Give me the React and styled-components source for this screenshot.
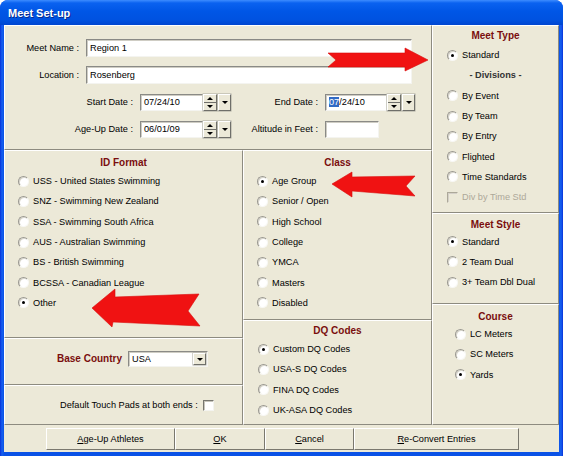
import React from "react";
import styled, { createGlobalStyle } from "styled-components";

const GlobalStyle = createGlobalStyle`
  html, body {
    margin: 0;
    padding: 0;
    background: #fff;
  }
  body {
    font-family: "Liberation Sans", Arial, sans-serif;
    font-size: 9.2px;
    color: #000;
  }
`;

const Window = styled.div`
  position: relative;
  width: 563px;
  height: 456px;
  display: flex;
  flex-direction: column;
  background: linear-gradient(90deg, #0831d9 0px, #1660f0 2px, #0a52e6 4px, #0a52e6 559px, #1660f0 561px, #0831d9 563px);
  border-radius: 8px 8px 0 0;
  overflow: hidden;
`;

const TitleBar = styled.div`
  height: 25px;
  flex: none;
  display: flex;
  align-items: center;
  padding-left: 8px;
  color: #fff;
  font-weight: bold;
  font-size: 11px;
  text-shadow: 1px 1px 0 #0a2a8a;
  background: linear-gradient(180deg, #3d8cff 0%, #0a62f0 12%, #0056e6 45%, #0052e0 80%, #0046d0 100%);
`;

const Client = styled.div`
  margin: 0 4px 4px;
  flex: 1;
  display: flex;
  flex-direction: column;
  background: #ece9d8;
`;

const Main = styled.div`
  display: flex;
  height: 400px;
`;

const Column = styled.div`
  width: ${(p) => p.$w}px;
  flex: none;
  display: flex;
  flex-direction: column;
`;

const Lower = styled.div`
  display: flex;
  height: 275px;
`;

const Panel = styled.div`
  height: ${(p) => p.$h}px;
  box-sizing: border-box;
  padding-top: ${(p) => p.$pt || 0}px;
  border-top: 1px solid #fff;
  border-left: 1px solid #fff;
  border-right: 1px solid #8d8b80;
  border-bottom: 1px solid #8d8b80;
  flex: none;
`;

const TopForm = styled(Panel)`
  display: flex;
  flex-direction: column;
  gap: 9px;
`;

const FieldRow = styled.div`
  display: flex;
  align-items: center;
  height: 18px;
`;

const Label = styled.div`
  width: ${(p) => p.$w}px;
  flex: none;
  box-sizing: border-box;
  padding-right: 7px;
  text-align: right;
  white-space: nowrap;
`;

const TextBox = styled.div`
  width: ${(p) => p.$w}px;
  height: ${(p) => p.$h || 18}px;
  flex: none;
  box-sizing: border-box;
  background: #fff;
  border: 1px solid;
  border-color: #8a8a86 #f4f4f0 #f4f4f0 #8a8a86;
  box-shadow: inset 1px 1px 0 #cfcdc4;
  padding-left: 3px;
  display: flex;
  align-items: center;
  white-space: nowrap;
  overflow: hidden;
`;

const Selected = styled.span`
  background: #316ac5;
  color: #fff;
`;

const SmallButton = styled.div`
  width: ${(p) => p.$w}px;
  height: ${(p) => p.$h || 17}px;
  flex: none;
  box-sizing: border-box;
  background: #ece9d8;
  border: 1px solid;
  border-color: #fff #6f6f6a #6f6f6a #fff;
  box-shadow: 0 0 0 0.5px #a8a79c;
  display: flex;
  flex-direction: column;
  align-items: center;
  justify-content: center;
  margin-left: ${(p) => p.$ml || 0}px;
`;

const SpinHalf = styled.div`
  flex: 1;
  width: 100%;
  display: flex;
  align-items: center;
  justify-content: center;
  & + & {
    border-top: 1px solid #6f6f6a;
  }
`;

const Triangle = styled.span`
  width: 0;
  height: 0;
  border-left: 3px solid transparent;
  border-right: 3px solid transparent;
  ${(p) =>
    p.$up ? "border-bottom: 3px solid #000;" : "border-top: 3px solid #000;"}
`;

const GroupTitle = styled.div`
  height: 16px;
  line-height: 16px;
  text-align: center;
  font-weight: bold;
  font-size: 10px;
  color: ${(p) => p.$color || "#7a0e0e"};
  margin-bottom: ${(p) => p.$gap || 0}px;
`;

const OptionList = styled.div`
  padding-left: ${(p) => p.$pl}px;
`;

const OptionRow = styled.div`
  height: 20.3px;
  display: flex;
  align-items: center;
  white-space: nowrap;
  color: ${(p) => (p.$disabled ? "#aca899" : "#000")};
`;

const RadioDot = styled.span`
  position: relative;
  width: 11px;
  height: 11px;
  flex: none;
  box-sizing: border-box;
  border-radius: 50%;
  background: #fff;
  border: 1px solid;
  border-color: #9a9890 #f8f8f4 #f8f8f4 #9a9890;
  box-shadow: inset 1px 1px 0 #d8d6cc;
  margin-right: 4px;
  &::after {
    content: "";
    display: ${(p) => (p.$checked ? "block" : "none")};
    position: absolute;
    left: 3px;
    top: 3px;
    width: 3px;
    height: 3px;
    border-radius: 50%;
    background: #000;
  }
`;

const CheckBox = styled.span`
  width: 11px;
  height: 11px;
  flex: none;
  box-sizing: border-box;
  background: ${(p) => (p.$disabled ? "transparent" : "#fff")};
  border: 1px solid;
  border-color: ${(p) =>
    p.$disabled ? "#aca899 transparent transparent #aca899" : "#77766f #f4f4f0 #f4f4f0 #77766f"};
  box-shadow: ${(p) => (p.$disabled ? "inset 1px 1px 0 #d4d0c8" : "inset 1px 1px 0 #c8c6bc")};
  margin-right: ${(p) => p.$mr || 0}px;
  margin-left: ${(p) => p.$ml || 0}px;
`;

const Divisions = styled.div`
  height: 20.3px;
  line-height: 20.3px;
  text-align: center;
  font-weight: bold;
  color: #333;
`;

const CountryPanel = styled(Panel)`
  display: flex;
  align-items: flex-start;
  padding-left: 52px;
`;

const CountryLabel = styled.div`
  font-weight: bold;
  font-size: 10px;
  color: #7a0e0e;
  line-height: 16px;
  margin-right: 6px;
`;

const SelectBox = styled(TextBox)`
  justify-content: space-between;
  padding-right: 1px;
`;

const TouchPanel = styled(Panel)`
  display: flex;
  align-items: center;
  padding-left: 55px;
`;

const TouchRow = styled.div`
  display: flex;
  align-items: center;
  height: 12px;
`;

const ButtonBar = styled.div`
  height: 27px;
  display: flex;
  align-items: flex-start;
  padding: 3px 0 0 42px;
  box-sizing: border-box;
`;

const Button = styled.div`
  width: ${(p) => p.$w}px;
  height: 22px;
  box-sizing: border-box;
  display: flex;
  align-items: center;
  justify-content: center;
  background: #ece9d8;
  border: 1px solid;
  border-color: #fff #7a786e #7a786e #fff;
  white-space: nowrap;
  & u {
    text-decoration: underline;
  }
`;

const Overlay = styled.svg`
  position: absolute;
  left: 0;
  top: 0;
  pointer-events: none;
`;

function DateField({ width, children }) {
  return (
    <>
      <TextBox $w={width} $h={17}>{children}</TextBox>
      <SmallButton $w={14}>
        <SpinHalf><Triangle $up /></SpinHalf>
        <SpinHalf><Triangle /></SpinHalf>
      </SmallButton>
      <SmallButton $w={13} $ml={1}>
        <Triangle />
      </SmallButton>
    </>
  );
}

function Radio({ label, checked }) {
  return (
    <OptionRow>
      <RadioDot $checked={checked} />
      {label}
    </OptionRow>
  );
}

const idFormats = [
  "USS - United States Swimming",
  "SNZ - Swimming New Zealand",
  "SSA - Swimming South Africa",
  "AUS - Australian Swimming",
  "BS - British Swimming",
  "BCSSA - Canadian League",
  "Other",
];
const classes = ["Age Group", "Senior / Open", "High School", "College", "YMCA", "Masters", "Disabled"];
const dqCodes = ["Custom DQ Codes", "USA-S DQ Codes", "FINA DQ Codes", "UK-ASA DQ Codes"];
const divisions = ["By Event", "By Team", "By Entry", "Flighted", "Time Standards"];
const styles = ["Standard", "2 Team Dual", "3+ Team Dbl Dual"];
const courses = ["LC Meters", "SC Meters", "Yards"];

export default function App() {
  return (
    <>
      <GlobalStyle />
      <Window>
        <TitleBar>Meet Set-up</TitleBar>
        <Client>
          <Main>
            <Column $w={428}>
              <TopForm $h={125} $pt={13}>
                <FieldRow>
                  <Label $w={81}>Meet Name :</Label>
                  <TextBox $w={326}>Region 1</TextBox>
                </FieldRow>
                <FieldRow>
                  <Label $w={81}>Location :</Label>
                  <TextBox $w={326}>Rosenberg</TextBox>
                </FieldRow>
                <FieldRow>
                  <Label $w={135}>Start Date :</Label>
                  <DateField width={63}>07/24/10</DateField>
                  <Label $w={94}>End Date :</Label>
                  <DateField width={62}>
                    <Selected>07</Selected>/24/10
                  </DateField>
                </FieldRow>
                <FieldRow>
                  <Label $w={135}>Age-Up Date :</Label>
                  <DateField width={63}>06/01/09</DateField>
                  <Label $w={94}>Altitude in Feet :</Label>
                  <TextBox $w={54} $h={17} />
                </FieldRow>
              </TopForm>
              <Lower>
                <Column $w={239}>
                  <Panel $h={188} $pt={4}>
                    <GroupTitle>ID Format</GroupTitle>
                    <OptionList $pl={13}>
                      {idFormats.map((t) => (
                        <Radio key={t} label={t} checked={t === "Other"} />
                      ))}
                    </OptionList>
                  </Panel>
                  <CountryPanel $h={47} $pt={12}>
                    <CountryLabel>Base Country</CountryLabel>
                    <SelectBox $w={80} $h={16}>
                      USA
                      <SmallButton $w={13} $h={12}>
                        <Triangle />
                      </SmallButton>
                    </SelectBox>
                  </CountryPanel>
                  <TouchPanel $h={40}>
                    <TouchRow>
                      Default Touch Pads at both ends :
                      <CheckBox $ml={5} />
                    </TouchRow>
                  </TouchPanel>
                </Column>
                <Column $w={189}>
                  <Panel $h={170} $pt={4}>
                    <GroupTitle>Class</GroupTitle>
                    <OptionList $pl={13}>
                      {classes.map((t) => (
                        <Radio key={t} label={t} checked={t === "Age Group"} />
                      ))}
                    </OptionList>
                  </Panel>
                  <Panel $h={105} $pt={2}>
                    <GroupTitle>DQ Codes</GroupTitle>
                    <OptionList $pl={14}>
                      {dqCodes.map((t) => (
                        <Radio key={t} label={t} checked={t === "Custom DQ Codes"} />
                      ))}
                    </OptionList>
                  </Panel>
                </Column>
              </Lower>
            </Column>
            <Column $w={127}>
              <Panel $h={188} $pt={2}>
                <GroupTitle $gap={1}>Meet Type</GroupTitle>
                <OptionList $pl={14}>
                  <Radio label="Standard" checked />
                </OptionList>
                <Divisions>- Divisions -</Divisions>
                <OptionList $pl={14}>
                  {divisions.map((t) => (
                    <Radio key={t} label={t} />
                  ))}
                  <OptionRow $disabled>
                    <CheckBox $disabled $mr={4} />
                    Div by Time Std
                  </OptionRow>
                </OptionList>
              </Panel>
              <Panel $h={91} $pt={3}>
                <GroupTitle $gap={-1.5}>Meet Style</GroupTitle>
                <OptionList $pl={14}>
                  {styles.map((t) => (
                    <Radio key={t} label={t} checked={t === "Standard"} />
                  ))}
                </OptionList>
              </Panel>
              <Panel $h={121} $pt={4}>
                <GroupTitle $gap={-1}>Course</GroupTitle>
                <OptionList $pl={22}>
                  {courses.map((t) => (
                    <Radio key={t} label={t} checked={t === "Yards"} />
                  ))}
                </OptionList>
              </Panel>
            </Column>
          </Main>
          <ButtonBar>
            <Button $w={129}><span><u>A</u>ge-Up Athletes</span></Button>
            <Button $w={90}><span><u>O</u>K</span></Button>
            <Button $w={89}><span><u>C</u>ancel</span></Button>
            <Button $w={165}><span><u>R</u>e-Convert Entries</span></Button>
          </ButtonBar>
        </Client>
        <Overlay width="563" height="456" viewBox="0 0 563 456">
          <g fill="#f01212" stroke="#d80c0c" strokeWidth="0.6" strokeLinejoin="round">
            <polygon points="328,53 405,53 405,48 428,60 405,71 405,67 328,67 336,60" />
            <polygon points="332,184 352,172 352,177 415,176 406,186 415,196 352,191 352,197" />
            <polygon points="92,308 115,289 115,297 199,294 188,311 200,326 113,322 112,327" />
          </g>
        </Overlay>
      </Window>
    </>
  );
}
